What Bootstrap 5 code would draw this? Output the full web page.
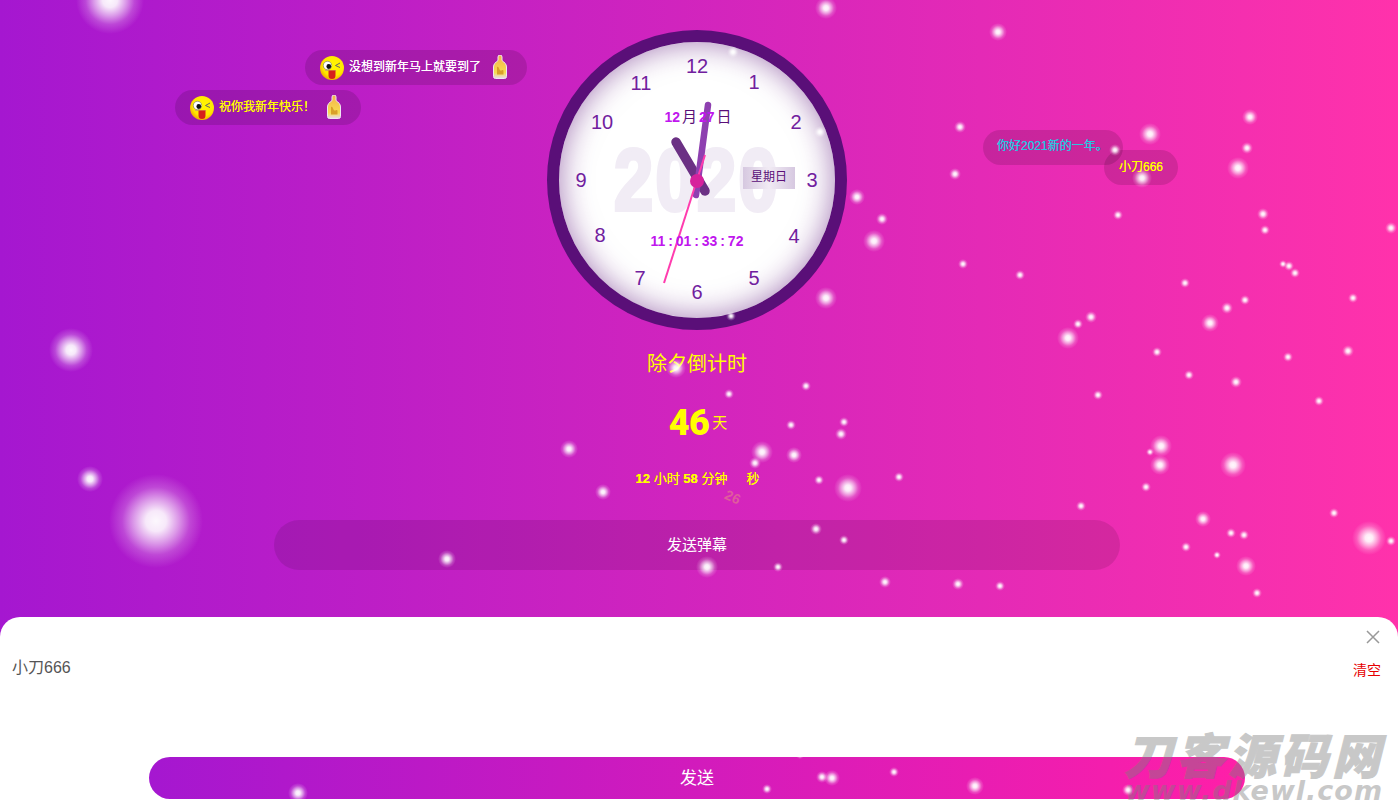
<!DOCTYPE html>
<html lang="zh">
<head>
<meta charset="utf-8">
<title>除夕倒计时</title>
<link href="https://cdn.jsdelivr.net/npm/bootstrap@5.3.0/dist/css/bootstrap.min.css" rel="stylesheet">
<style>
html,body{height:100%;margin:0}
body{font-family:"Liberation Sans","Noto Sans CJK SC",sans-serif;overflow:hidden;background:#fff}
.stage{height:805px;background:linear-gradient(to right,#a517d0,#ff32ab);overflow:hidden}
.upper{padding-right:4px}
.dial-wrap{width:300px;height:300px;margin-top:30px;flex:none}
.dial{width:300px;height:300px;border:12px solid #5a0f78;background:#fff;box-shadow:inset 0 0 30px rgba(90,15,120,.55)}
.year{left:-12px;right:-12px;top:94px;text-align:center;font:900 88px/1 "Liberation Sans",sans-serif;color:#f1ecf5;-webkit-text-stroke:4px #f1ecf5;transform:scaleX(.8);letter-spacing:3px}
.num{transform:translate(-50%,-50%);font-size:20px;line-height:1;color:#71209e}
.date-line{left:0;right:0;top:66px;text-align:center;font-size:15px;color:#5a0f78;line-height:1.2}
.date-line b{color:#c016ee;font-size:14px;margin:0 2px}
.time-line{left:0;right:0;top:191px;text-align:center;font-size:14px;font-weight:700;color:#c016ee;word-spacing:-1px;line-height:1.2}
.week{left:184px;top:125px;width:52px;height:22px;font-size:12px;line-height:20px;text-align:center;color:#5a0f78;background:linear-gradient(to right,#d6c8e0,#f1ebf4 50%,#d6c8e0)}
.hands{left:-12px;top:-12px}
.cd-title{margin-top:21px;font-size:20px;line-height:27px;color:#ff0}
.cd-days{margin-top:20px;height:50px;color:#ff0;margin-left:2px}
.cd-num{font:900 36px/50px Roboto,sans-serif;letter-spacing:-.5px}
.cd-unit{font-size:15px;margin-left:3px}
.cd-rest{margin-top:20px;height:22px;font-size:13px;line-height:22px;color:#ff0;text-shadow:0 0 .4px #ff0;margin-left:1px}
.cd-rest b{font-size:13px}
.gap-sec{width:19px}
.fall{left:725px;top:490px;font:700 14px/1 "Liberation Sans",sans-serif;color:#e05a9e;transform:rotate(25deg)}
.shoot{width:846px;height:50px;margin-top:30px;background:rgba(0,0,0,.1);color:#fff;font-size:15px;line-height:50px;text-align:center;flex:none}
.barrage{height:35px;background:rgba(0,0,0,.13);font-size:12px;line-height:33px;white-space:nowrap;text-shadow:0 0 .6px currentColor}
.b1{left:305px;top:50px;width:222px;color:#fff;padding-left:15px}
.b2{left:175px;top:90px;width:186px;color:#ff0;padding-left:15px}
.b3{left:983px;top:130px;width:140px;color:#2ac4e0;padding-left:14px}
.b4{left:1104px;top:150px;width:74px;color:#ff0;padding-left:15px;line-height:35px}
.emo{width:24px;height:24px;margin-right:5px;flex:none}
.bot{width:16px;height:25px;flex:none}
.sheet{height:188px;background:#fff;border-radius:20px 20px 0 0;flex:none}
.who{left:12px;top:41px;font-size:16px;line-height:20px;color:#555}
.wipe{right:17px;top:44px;font-size:14px;line-height:18px;color:#e60000}
.shut{right:18px;top:13px}
.go{left:149px;top:140px;width:1096px;height:42px;border-radius:21px;background:linear-gradient(to right,#a517d0,#ff1fa8);color:#fff;font-size:17px;line-height:44px;text-align:center;border:0;padding:0}
.mark-wm{left:1118px;top:726px;width:272px;color:#7d7d7d;opacity:.42;text-align:center;z-index:4;pointer-events:none}
.mark-wm .cn{font:italic 900 48px/54px "Noto Sans CJK SC",sans-serif;letter-spacing:4px;white-space:nowrap;display:block;-webkit-text-stroke:1px #7d7d7d}
.mark-wm .en{font:italic 700 27px/21px "DejaVu Sans",sans-serif;letter-spacing:1px;white-space:nowrap;display:block}
.flake{position:absolute;border-radius:50%;background:radial-gradient(circle closest-side,rgba(255,255,255,.97) 0,rgba(255,255,255,.9) 22%,rgba(255,255,255,.55) 48%,rgba(255,255,255,.2) 72%,rgba(255,255,255,0) 100%);z-index:5;pointer-events:none}
</style>
</head>
<body>
<div class="stage position-relative d-flex flex-column align-items-center">
  <div class="upper w-100 d-flex flex-column align-items-center">
  <div class="dial-wrap position-relative">
    <div class="dial rounded-circle position-relative">
      <div class="year position-absolute">2020</div>
      <div class="week position-absolute">星期日</div>
      <span class="num position-absolute" style="left:138px;top:24px">12</span>
      <span class="num position-absolute" style="left:195px;top:40px">1</span>
      <span class="num position-absolute" style="left:237px;top:80px">2</span>
      <span class="num position-absolute" style="left:253px;top:138px">3</span>
      <span class="num position-absolute" style="left:235px;top:194px">4</span>
      <span class="num position-absolute" style="left:195px;top:236px">5</span>
      <span class="num position-absolute" style="left:138px;top:250px">6</span>
      <span class="num position-absolute" style="left:81px;top:236px">7</span>
      <span class="num position-absolute" style="left:41px;top:193px">8</span>
      <span class="num position-absolute" style="left:22px;top:138px">9</span>
      <span class="num position-absolute" style="left:43px;top:80px">10</span>
      <span class="num position-absolute" style="left:82px;top:41px">11</span>
      <svg class="hands position-absolute" width="300" height="300" viewBox="0 0 300 300">
        <line x1="129" y1="112" x2="158" y2="161" stroke="#6b3084" stroke-width="9.500" stroke-linecap="round"/>
        <line x1="161" y1="75" x2="149" y2="165" stroke="#8e40b0" stroke-width="6.500" stroke-linecap="round"/>
        <line x1="117" y1="253" x2="158" y2="125" stroke="#ff3cae" stroke-width="2"/>
        <circle cx="150" cy="151" r="7" fill="#d6219c"/>
      </svg>
      <div class="date-line position-absolute"><b>12</b>月<b>27</b>日</div>
      <div class="time-line position-absolute">11 : 01 : 33 : 72</div>
    </div>
  </div>
  <div class="cd-title">除夕倒计时</div>
  <div class="cd-days d-flex align-items-center"><span class="cd-num">46</span><span class="cd-unit">天</span></div>
  <div class="cd-rest d-flex"><b>12</b>&nbsp;小时&nbsp;<b>58</b>&nbsp;分钟<span class="gap-sec"></span>秒</div>
  <div class="shoot rounded-pill">发送弹幕</div>
  </div>

  <div class="fall position-absolute">26</div>

  <div class="barrage b1 position-absolute rounded-pill d-flex align-items-center">
    <svg class="emo" viewBox="0 0 24 24"><use href="#face"/></svg><span>没想到新年马上就要到了</span><svg class="bot ms-auto" style="margin-right:19px" viewBox="0 0 16 25"><use href="#bottle"/></svg>
  </div>
  <div class="barrage b2 position-absolute rounded-pill d-flex align-items-center">
    <svg class="emo" viewBox="0 0 24 24"><use href="#face"/></svg><span>祝你我新年快乐！</span><svg class="bot ms-auto" style="margin-right:19px" viewBox="0 0 16 25"><use href="#bottle"/></svg>
  </div>
  <div class="barrage b3 position-absolute rounded-pill">你好2021新的一年。</div>
  <div class="barrage b4 position-absolute rounded-pill">小刀666</div>

  <div class="sheet position-relative w-100 mt-auto">
    <svg class="shut position-absolute" width="14" height="14" viewBox="0 0 14 14"><path d="M1 1 13 13M13 1 1 13" stroke="#999" stroke-width="1.500" fill="none"/></svg>
    <div class="who position-absolute">小刀666</div>
    <div class="wipe position-absolute">清空</div>
    <button class="go position-absolute" type="button">发送</button>
  </div>

  <div class="mark-wm position-absolute"><span class="cn">刀客源码网</span><span class="en">www.dkewl.com</span></div>
</div>

<svg width="0" height="0" class="position-absolute">
  <defs>
    <radialGradient id="fg" cx=".55" cy=".4" r=".62"><stop offset="0" stop-color="#fff700"/><stop offset=".7" stop-color="#ffe800"/><stop offset="1" stop-color="#f0a800"/></radialGradient>
    <linearGradient id="bg" x1="0" y1="0" x2="0" y2="1"><stop offset="0" stop-color="#f4b24a"/><stop offset=".75" stop-color="#f6dc50"/><stop offset="1" stop-color="#e8d8f0"/></linearGradient>
    <symbol id="face" viewBox="0 0 24 24">
      <circle cx="12" cy="12" r="12" fill="url(#fg)"/>
      <circle cx="7.500" cy="9.500" r="4.200" fill="#fff" stroke="#555" stroke-width=".5"/>
      <circle cx="8.800" cy="10.500" r="2.400" fill="#111"/>
      <path d="M20 7 15.500 9.500 20 11.500" stroke="#666" stroke-width="1" fill="none"/>
      <path d="M5 14.500h11" stroke="#b88" stroke-width=".6"/>
      <path d="M8.500 14.500h7v5a3.500 3.500 0 0 1-7 0z" fill="#d6201c"/>
    </symbol>
    <symbol id="bottle" viewBox="0 0 16 25">
      <path d="M6 2a2 2 0 0 1 4 0v3.500c2.500 2 4.500 3.500 4.500 6.500v9.500a2 2 0 0 1-2 2h-9a2 2 0 0 1-2-2V12c0-3 2-4.500 4.500-6.500z" fill="url(#bg)" stroke="#efe4f4" stroke-width="1"/>
      <path d="M5 12c2-1 2 3 3.500 3.500s2-1.500 3 0v4H5z" fill="#d99f2a"/>
    </symbol>
  </defs>
</svg>

<script>
var flakes=[[110,0,25],[826,8,8],[998,32,6],[733,52,4],[960,127,4],[1150,134,8],[1250,117,5],[1247,148,4],[1238,168,8],[955,174,4],[857,197,5],[882,219,4],[874,241,8],[1118,215,3],[1263,214,4],[1265,230,3],[1391,228,4],[963,264,3],[1020,275,3],[1283,264,2],[1289,266,3],[1295,273,3],[1185,283,3],[1245,300,3],[1227,308,4],[1353,298,3],[1210,323,6],[1091,317,4],[1078,324,3],[1068,338,8],[826,298,8],[731,316,3],[71,350,16],[1157,352,3],[1288,357,3],[1348,351,4],[1189,375,3],[1236,382,4],[806,386,3],[1098,395,3],[1319,401,3],[676,368,7],[729,394,3],[844,422,3],[791,425,3],[841,434,4],[569,449,6],[762,452,8],[794,455,5],[1161,446,8],[1150,452,2],[1160,465,7],[755,463,4],[1233,465,9],[90,479,9],[819,480,3],[899,477,3],[848,488,10],[1146,487,3],[603,492,5],[156,521,35],[1081,506,3],[1334,513,3],[1203,519,5],[816,529,4],[844,540,3],[1231,533,3],[1244,535,3],[1369,538,12],[1391,541,3],[1186,547,3],[1217,555,2],[447,559,6],[707,567,8],[778,567,3],[1246,566,7],[885,582,4],[958,584,4],[1000,586,3],[1257,593,3],[1142,178,7],[1115,150,4],[820,132,4],[767,789,3],[822,777,4],[832,778,5],[894,772,3],[975,786,6],[298,793,7],[1128,790,4],[800,755,2]];
var stage=document.querySelector('.stage');
flakes.forEach(function(f){
  var r=Math.round(f[2]*1.3+1);
  var d=document.createElement('div');d.className='flake';
  d.style.left=(f[0]-r)+'px';d.style.top=(f[1]-r)+'px';
  d.style.width=d.style.height=(r*2)+'px';
  stage.appendChild(d);
});
</script>
<script src="https://cdn.jsdelivr.net/npm/bootstrap@5.3.0/dist/js/bootstrap.bundle.min.js"></script>
</body>
</html>
